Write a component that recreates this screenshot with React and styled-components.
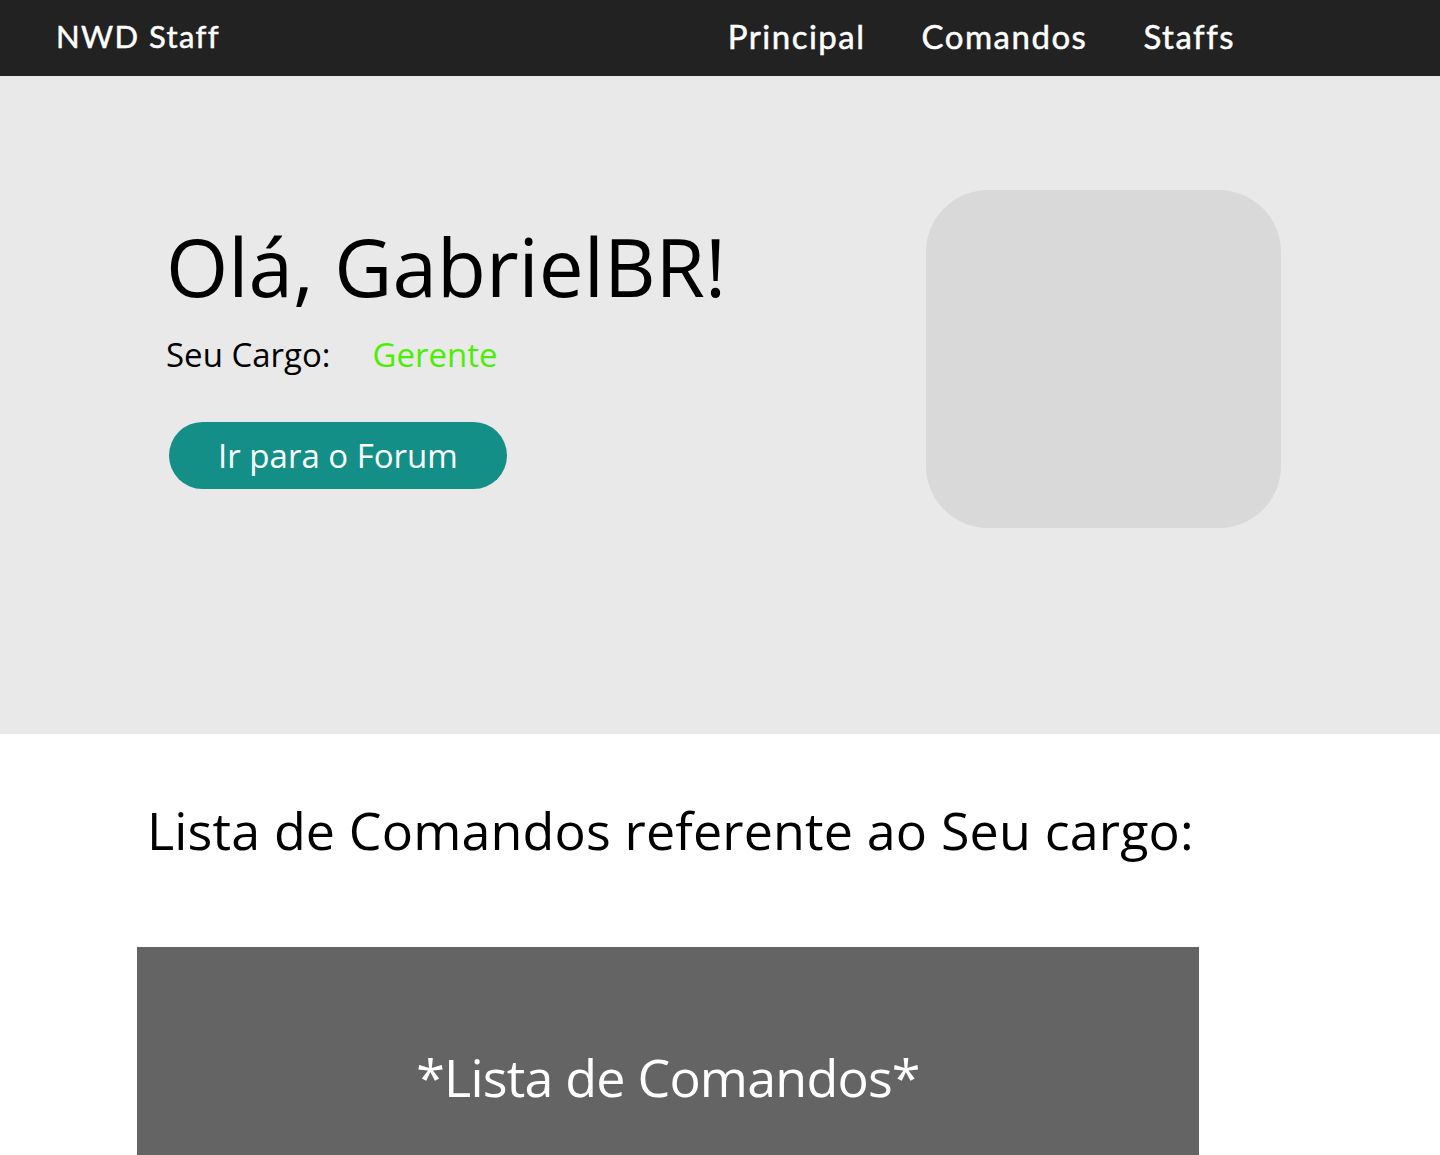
import React from "react";
import styled, { createGlobalStyle } from "styled-components";

const Global = createGlobalStyle`
  html, body { margin: 0; padding: 0; background: #ffffff; }
  body { font-family: "Open Sans", "Noto Sans", sans-serif; }
  * { box-sizing: border-box; }
`;

const Page = styled.div`
  width: 1440px;
  min-height: 1155px;
  overflow: hidden;
`;

const NavBar = styled.header`
  height: 76px;
  background: #222222;
  display: flex;
  align-items: center;
  padding: 0 0 4px 56px;
`;

const Brand = styled.div`
  font-family: "Lato", sans-serif;
  font-weight: 400;
  font-size: 31px;
  color: #ffffff;
  letter-spacing: 1.4px;
  -webkit-text-stroke: 0.5px #ffffff;
`;

const NavLinks = styled.nav`
  margin-left: auto;
  margin-right: 205px;
  display: flex;
  gap: 56px;
`;

const NavLink = styled.a`
  font-family: "Lato", sans-serif;
  font-weight: 400;
  font-size: 33px;
  color: #ffffff;
  text-decoration: none;
  letter-spacing: 1.5px;
  -webkit-text-stroke: 0.5px #ffffff;
`;

const Hero = styled.section`
  height: 658px;
  background: #e9e9e9;
  display: flex;
  align-items: flex-start;
  padding: 114px 0 0 166px;
`;

const HeroText = styled.div`
  width: 760px;
  padding-top: 26px;
  display: flex;
  flex-direction: column;
`;

const Greeting = styled.h1`
  margin: 0;
  font-family: "Open Sans", sans-serif;
  font-weight: 400;
  font-size: 80px;
  line-height: 100px;
  color: #000000;
  letter-spacing: 0px;
`;

const RoleRow = styled.div`
  margin-top: 19px;
  display: flex;
  gap: 42px;
  font-family: "Open Sans", sans-serif;
  font-size: 33px;
  line-height: 40px;
  letter-spacing: 0px;
`;

const RoleLabel = styled.span`
  color: #000000;
`;

const RoleValue = styled.span`
  color: #4cee00;
`;

const ForumButton = styled.button`
  margin: 47px 0 0 3px;
  width: 338px;
  height: 67px;
  border: none;
  border-radius: 34px;
  background: #138f88;
  color: #ffffff;
  font-family: "Open Sans", sans-serif;
  font-size: 33px;
  letter-spacing: 0px;
  cursor: pointer;
`;

const Avatar = styled.div`
  width: 355px;
  height: 338px;
  border-radius: 62px;
  background: #d9d9d9;
`;

const Commands = styled.section`
  padding: 66px 0 0 137px;
`;

const SectionTitle = styled.h2`
  margin: 0 0 0 10px;
  font-family: "Open Sans", sans-serif;
  font-weight: 400;
  font-size: 52px;
  line-height: 60px;
  color: #000000;
  letter-spacing: 0.15px;
`;

const CommandBox = styled.div`
  margin-top: 87px;
  width: 1062px;
  height: 260px;
  background: #646464;
  display: flex;
  justify-content: center;
  padding-top: 100px;
`;

const CommandText = styled.div`
  font-family: "Open Sans", sans-serif;
  font-size: 52px;
  line-height: 60px;
  color: #ffffff;
  letter-spacing: -0.8px;
`;

export default function App() {
  return (
    <Page>
      <Global />
      <NavBar>
        <Brand>NWD Staff</Brand>
        <NavLinks>
          <NavLink href="#">Principal</NavLink>
          <NavLink href="#">Comandos</NavLink>
          <NavLink href="#">Staffs</NavLink>
        </NavLinks>
      </NavBar>
      <Hero>
        <HeroText>
          <Greeting>Olá, GabrielBR!</Greeting>
          <RoleRow>
            <RoleLabel>Seu Cargo:</RoleLabel>
            <RoleValue>Gerente</RoleValue>
          </RoleRow>
          <ForumButton>Ir para o Forum</ForumButton>
        </HeroText>
        <Avatar />
      </Hero>
      <Commands>
        <SectionTitle>Lista de Comandos referente ao Seu cargo:</SectionTitle>
        <CommandBox>
          <CommandText>*Lista de Comandos*</CommandText>
        </CommandBox>
      </Commands>
    </Page>
  );
}
